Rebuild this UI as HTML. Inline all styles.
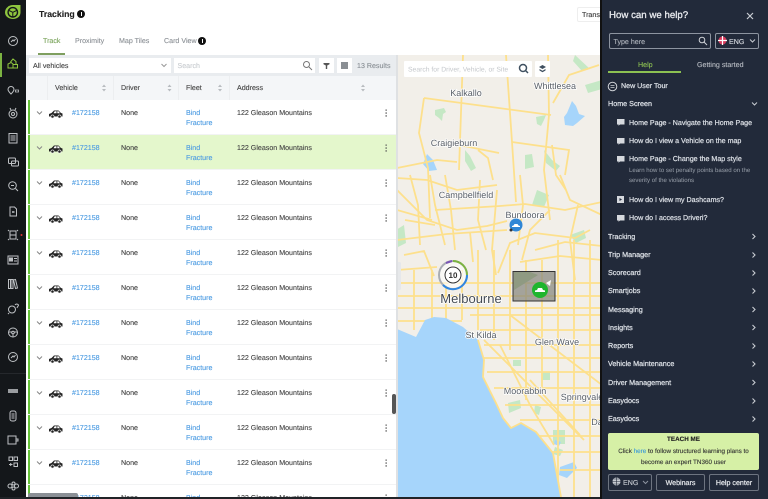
<!DOCTYPE html>
<html><head><meta charset="utf-8"><style>
html,body{margin:0;padding:0;width:768px;height:499px;overflow:hidden}
#w{position:absolute;left:0;top:0;width:768px;height:499px;overflow:hidden;background:#fff;font-family:"Liberation Sans",sans-serif;font-size:7.1px;color:#444;text-rendering:geometricPrecision;-webkit-text-stroke:.12px}
.a{position:absolute;white-space:nowrap;line-height:10px}
.r{position:absolute;left:28px;width:368px;height:35px;background:#fff;border-bottom:1px solid #f2f3f4;box-sizing:border-box}
.r:before{content:"";position:absolute;left:0;top:0;width:2px;height:34px;background:#66c23a}
.r span{position:absolute;line-height:10px;white-space:nowrap;top:8px}
.l{color:#4b9be2}
.h{position:absolute;top:83px;line-height:10px;color:#444}
.c{position:absolute;left:608px;color:#d9dde3;font-size:7.2px;line-height:10px;white-space:nowrap;-webkit-text-stroke:.28px #d9dde3}
.i{position:absolute;left:629px;color:#d9dde3;font-size:7.1px;line-height:10px;white-space:nowrap;-webkit-text-stroke:.25px #d9dde3}
.t{position:absolute;left:0;top:0}
</style></head><body><div id="w">

<!-- sidebar -->
<div class="a" style="left:0;top:0;width:26px;height:499px;background:#14171a"></div>
<div class="a" style="left:0;top:53px;width:2px;height:24px;background:#7cb342"></div>
<div class="a" style="left:0;top:373px;width:26px;height:1px;background:#25282c"></div>
<svg class="t" width="26" height="499" fill="none" stroke="#bfc2c5" stroke-width="1">
<path d="M5 12.500C5 8 9 5 13 5h7.500v7.500c0 4-3.500 6.500-7.500 6.500s-8-2.500-8-6.500z" fill="#8fc63f" stroke="none"/>
<circle cx="12.800" cy="12.300" r="4.700" stroke="#14171a" stroke-width="1.400"/><path d="M9 10.500l3.800 1.800 3.800-1.800M12.800 12.300v4.500" stroke="#14171a"/>
<circle cx="13" cy="41" r="4.500"/><path d="M11 42l2-2 1 1 1.500-2"/>
<path d="M8 68v-4l3-1.500 2 1.500v4zM10.500 62l2.500-3 3 2.500v2.500M13 64.500h4.500v3.500H13z" stroke="#8fc63f"/>
<path d="M11 94c-2-2-3-3-3-4.500a3 3 0 0 1 6 0c0 1.500-1 2.500-3 4.500z"/><path d="M15.500 92h3v-2h-3z" stroke-width=".8"/>
<path d="M10 108l1 2M16 108l-1 2"/><circle cx="13" cy="114" r="4"/><circle cx="13" cy="114" r="1.500"/>
<rect x="9" y="133.500" width="8" height="9.500"/><path d="M10.500 136h5M10.500 138h5M10.500 140h5"/>
<rect x="8.500" y="158" width="7" height="5.500" rx="1"/><rect x="11.500" y="161" width="7" height="5" rx="1"/>
<circle cx="12.500" cy="185.500" r="3.800"/><path d="M15.500 188.500l2.500 2.500M11 185.500h3"/>
<path d="M10 207h4.500l2 2v7h-6.500z"/><path d="M12 212h2.500" stroke-width="1.500"/>
<path d="M10 231h6v8h-6zM9 231l-1-1M17 231l1-1M9 239l-1 1M17 239l1 1M10 235h6"/>
<rect x="8" y="256" width="10" height="8"/><rect x="9.500" y="258" width="3" height="3" fill="#bfc2c5"/><path d="M14 258.500h3M14 261h3"/>
<path d="M8.500 279.500v9h2v-9zM11 279.500v9h2v-9zM13.500 280l2-.5 2 8.500-2 .5z"/>
<circle cx="12" cy="309.500" r="3.500"/><path d="M9 313l-1 1M15 305a2 2 0 0 1 3.500 0c0 1-1.200 1.500-1.500 3"/>
<circle cx="13" cy="332.500" r="4.500"/><circle cx="13" cy="332.500" r="1.300"/><path d="M8.500 332h3M14.500 332h3M13 334v3"/>
<circle cx="13" cy="357" r="4.500"/><path d="M11 358l2-2 1 1 1.500-2"/>
<rect x="8" y="389" width="10" height="4" fill="#9a9da0" stroke="none"/>
<rect x="10" y="411" width="6" height="10" rx="2"/><path d="M11.500 414h3M11.500 416h3M11.500 418h3"/>
<rect x="8" y="436" width="8" height="8"/><path d="M16 439h2v2h-2"/>
<rect x="9" y="457" width="3.500" height="3.500"/><rect x="14" y="457" width="3.500" height="3.500"/><rect x="14" y="463" width="3.500" height="3.500"/><path d="M9 464.500h3.500M10.700 463v3"/>
<circle cx="10" cy="486" r="2"/><circle cx="13.500" cy="483.500" r="1.500"/><circle cx="13.500" cy="488.500" r="1.500"/><circle cx="16.500" cy="486" r="2"/>
<circle cx="21.500" cy="235" r="1" fill="#d33" stroke="none"/>
</svg>

<!-- top -->
<div class="a" style="left:39px;top:9px;font-size:8.700px;font-weight:bold;color:#222;line-height:11px">Tracking</div>
<div class="a" style="left:77px;top:10px;width:8px;height:8px;background:#111;border-radius:50%"></div>
<div class="a" style="left:80.500px;top:12px;width:1.200px;height:4px;background:#fff"></div>
<div class="a" style="left:43px;top:36px;color:#79a35a">Track</div>
<div class="a" style="left:75px;top:36px;color:#8c9196">Proximity</div>
<div class="a" style="left:119px;top:36px;color:#8c9196">Map Tiles</div>
<div class="a" style="left:164px;top:36px;color:#8c9196">Card View</div>
<div class="a" style="left:198px;top:37px;width:8px;height:8px;background:#111;border-radius:50%"></div>
<div class="a" style="left:201.500px;top:39px;width:1.200px;height:4px;background:#fff"></div>
<div class="a" style="left:38px;top:53px;width:27px;height:2px;background:#7f9f5f"></div>
<div class="a" style="left:577px;top:7px;width:30px;height:15px;background:#fff;border:1px solid #eee;border-radius:2px;box-sizing:border-box;padding:2px 0 0 4px;color:#333;overflow:hidden">Transf</div>

<!-- toolbar -->
<div class="a" style="left:26px;top:55px;width:371px;height:21px;background:#e9ecef"></div>
<div class="a" style="left:29px;top:58px;width:142px;height:15px;background:#fff;padding:2.500px 0 0 4px;box-sizing:border-box;color:#444">All vehicles</div>
<svg class="t" style="left:160px;top:62px" width="8" height="7" fill="none" stroke="#999"><path d="M1.500 2l2.500 2.500L6.500 2"/></svg>
<div class="a" style="left:174px;top:58px;width:141px;height:15px;background:#fff;padding:2.500px 0 0 3.500px;box-sizing:border-box;color:#c8ccd0">Search</div>
<svg class="t" style="left:302px;top:60px" width="11" height="11" fill="none" stroke="#777"><circle cx="4.500" cy="4.500" r="3"/><path d="M7 7l3 3"/></svg>
<div class="a" style="left:319px;top:58px;width:15px;height:15px;background:#fff"></div>
<svg class="t" style="left:322px;top:62px" width="9" height="8" fill="#555"><path d="M1.500 1h6v1.300L5.200 3.500v3.500H3.800V3.500L1.500 2.300z"/></svg>
<div class="a" style="left:337px;top:58px;width:15px;height:15px;background:#fff"></div>
<div class="a" style="left:341px;top:62px;width:7px;height:7px;background:#8a8f94"></div>
<div class="a" style="left:357px;top:61px;color:#8a9096">13 Results</div>

<!-- table head -->
<div class="a" style="left:26px;top:76px;width:371px;height:24px;background:#f4f6f8"></div>
<div class="a" style="left:47px;top:76px;width:1px;height:24px;background:#eceef0"></div>
<div class="a" style="left:113px;top:76px;width:1px;height:24px;background:#eceef0"></div>
<div class="a" style="left:178px;top:76px;width:1px;height:24px;background:#eceef0"></div>
<div class="a" style="left:229px;top:76px;width:1px;height:24px;background:#eceef0"></div>
<div class="h" style="left:55px">Vehicle</div><div class="h" style="left:121px">Driver</div><div class="h" style="left:186px">Fleet</div><div class="h" style="left:237px">Address</div>
<svg class="t" width="400" height="100" fill="#b8bcc0">
<path d="M102 87l2-2.500 2 2.500zM102 89l2 2.500 2-2.500zM167.500 87l2-2.500 2 2.500zM167.500 89l2 2.500 2-2.500zM218 87l2-2.500 2 2.500zM218 89l2 2.500 2-2.500zM361 87l2-2.500 2 2.500zM361 89l2 2.500 2-2.500z"/>
</svg>

<!-- rows -->
<div class="r" style="top:100px"><span style="left:44px" class="l">#172158</span><span style="left:93px">None</span><span style="left:158px" class="l">Bind<br>Fracture</span><span style="left:209px">122 Gleason Mountains</span></div>
<div class="r" style="top:135px;background:#e4f7cc"><span style="left:44px" class="l">#172158</span><span style="left:93px">None</span><span style="left:158px" class="l">Bind<br>Fracture</span><span style="left:209px">122 Gleason Mountains</span></div>
<div class="r" style="top:170px"><span style="left:44px" class="l">#172158</span><span style="left:93px">None</span><span style="left:158px" class="l">Bind<br>Fracture</span><span style="left:209px">122 Gleason Mountains</span></div>
<div class="r" style="top:205px"><span style="left:44px" class="l">#172158</span><span style="left:93px">None</span><span style="left:158px" class="l">Bind<br>Fracture</span><span style="left:209px">122 Gleason Mountains</span></div>
<div class="r" style="top:240px"><span style="left:44px" class="l">#172158</span><span style="left:93px">None</span><span style="left:158px" class="l">Bind<br>Fracture</span><span style="left:209px">122 Gleason Mountains</span></div>
<div class="r" style="top:275px"><span style="left:44px" class="l">#172158</span><span style="left:93px">None</span><span style="left:158px" class="l">Bind<br>Fracture</span><span style="left:209px">122 Gleason Mountains</span></div>
<div class="r" style="top:310px"><span style="left:44px" class="l">#172158</span><span style="left:93px">None</span><span style="left:158px" class="l">Bind<br>Fracture</span><span style="left:209px">122 Gleason Mountains</span></div>
<div class="r" style="top:345px"><span style="left:44px" class="l">#172158</span><span style="left:93px">None</span><span style="left:158px" class="l">Bind<br>Fracture</span><span style="left:209px">122 Gleason Mountains</span></div>
<div class="r" style="top:380px"><span style="left:44px" class="l">#172158</span><span style="left:93px">None</span><span style="left:158px" class="l">Bind<br>Fracture</span><span style="left:209px">122 Gleason Mountains</span></div>
<div class="r" style="top:415px"><span style="left:44px" class="l">#172158</span><span style="left:93px">None</span><span style="left:158px" class="l">Bind<br>Fracture</span><span style="left:209px">122 Gleason Mountains</span></div>
<div class="r" style="top:450px"><span style="left:44px" class="l">#172158</span><span style="left:93px">None</span><span style="left:158px" class="l">Bind<br>Fracture</span><span style="left:209px">122 Gleason Mountains</span></div>
<div class="r" style="top:485px"><span style="left:44px" class="l">#172158</span><span style="left:93px">None</span><span style="left:158px" class="l">Bind<br>Fracture</span><span style="left:209px">122 Gleason Mountains</span></div>

<!-- row icons -->
<svg class="t" width="396" height="499">
<defs>
<g id="rw">
<path d="M37 11.500l2.500 2.500L42 11.500" fill="none" stroke="#888"/>
<path d="M49 16.500v-2.500l2.500-1 2.500-2.500h4.500l2.500 2.500 1.500.5v3z" fill="#222"/>
<path d="M54.700 11.200h1.800v2h-3zM57.300 11.200h1.200l1.500 2h-2.700z" fill="#fff"/>
<circle cx="52.500" cy="16.500" r="1.600" fill="#222" stroke="#fff" stroke-width=".6"/><circle cx="59.500" cy="16.500" r="1.600" fill="#222" stroke="#fff" stroke-width=".6"/>
<path d="M385.500 9.500h1.300v1.300h-1.300zM385.500 12.400h1.300v1.300h-1.300zM385.500 15.300h1.300v1.300h-1.300z" fill="#555"/>
</g>
</defs>
<use href="#rw" y="100"/><use href="#rw" y="135"/><use href="#rw" y="170"/><use href="#rw" y="205"/><use href="#rw" y="240"/><use href="#rw" y="275"/><use href="#rw" y="310"/><use href="#rw" y="345"/><use href="#rw" y="380"/><use href="#rw" y="415"/><use href="#rw" y="450"/><use href="#rw" y="485"/>
</svg>

<div class="a" style="left:392px;top:394px;width:4px;height:20px;background:#555;border-radius:2px"></div>
<div class="a" style="left:28px;top:493px;width:50px;height:4px;background:#8b9096;border-radius:2px 2px 0 0"></div>
<div class="a" style="left:0;top:497px;width:602px;height:2px;background:#202327"></div>

<!-- map -->
<svg class="t" style="left:397px;top:55px" width="205" height="442" viewBox="397 55 205 442">
<rect x="397" y="55" width="205" height="442" fill="#f2efe9"/>
<g fill="#c5e8c5">
<path d="M435 110l9-2 2 4-3 2-1 7-3-3-4-3zM536 117l10-2-2 5-3 6-4-2zM465 150l5 6 6 12-5 3-6-10zM525 155l7-1 2 13-9 2zM544 150l8 10 8 6-4 5-10-8z"/>
<path d="M575 55l15 14-8 2-9-10zM585 85l17-5v9l-14 4zM396 230l8-5 2 18-8 4zM537 190l12 5-5 12-12-2zM570 235l14-5 2 8-10 5zM513 360h8v6h-8zM542 372h8v8h-8zM508 403l12-3 1 8-12 5zM553 430h12v14h-12zM535 405l6 2-2 8-5-2zM555 447l8 3-3 6-7-2z"/>
</g>
<g fill="#a6d5fb">
<path d="M567 113l5-12 4 5 3 8 6 2-8 7-4 3-8-1-1-8z"/>
<path d="M427 154l6 6 4 10-8 1-6-7zM560 467l14-5 3 6-10 10-8-3zM555 440l6 2-2 4-5-2z"/>
</g>
<g fill="none" stroke="#fde08c" stroke-width="1.800">
<path d="M424 98L551 115M424 98l-5 35 9 35 2 50M463 55l-4 115M506 55l6 87 4 60M548 55l1 60-5 55 6 50M599 65l-30 10-16 28M397 168l40-8 20 2M512 142l57 8-4 25M459 145l40 8M478 150l10 8 5 22M552 145l4 30 10 15"/>
<path d="M397 190l30 30 30 10 30-4 20-5M405 220l30 5M430 175l5 30 10 40M397 210l35 10M470 232l3 30M497 190l-5 60 4 25M435 210l65-4 25-2 40 6 37-8M560 175l10 25 32 15M550 210l-20 20-8 30M578 205l-8 35 5 40M590 230l-15 8-40-5-25 10-12 30"/>
<path d="M404 255l20-4 10 25M397 283h205M397 296h205M397 270l40-3M397 308h205M397 321h65M470 315h132M414 270v60M432 270v48M446 285v35M462 270v50M478 250v80M494 250v90M510 250v100M526 260v140M542 260v130M558 240v257M574 240v257M590 240v257M480 330h122M484 345h118M484 358h118M487 372h115M494 388h108M505 405h97M520 420h82M535 436h67M548 452h54M560 470h42"/>
<path d="M484 340l100 100M510 315l92 70M500 345l30 60 24 40M530 380l50 55"/>
<path d="M410 175l8 30 2 40M445 175l6 35 4 40M397 240l50-6 60-4M480 180l-2 40 8 30M397 178l30 2 30 10 40-5M520 175l3 30-5 40M535 250l30-8 37 4M520 262l40-6 42 4"/>
</g>
<path d="M397 329l19 8 9-17 9-3 12 1 17 9 15 13 6 20-1 17 13 26 7 15 8 10 10-5 15 9 17 21 8 44H397z" fill="#a6d5fb"/>
<path d="M478 340l6 20-1 17 13 26 7 15 8 10 10-5 15 9 17 21 8 44" fill="none" stroke="#fde08c" stroke-width="1.800"/>
<rect x="397" y="262" width="4" height="28" rx="1.500" fill="#e6e8ea"/>
<g font-family="Liberation Sans, sans-serif" fill="#5a6068" font-size="9" text-anchor="middle" stroke="#fff" stroke-width="1.500" paint-order="stroke">
<text x="466" y="96">Kalkallo</text>
<text x="555" y="89">Whittlesea</text>
<text x="454" y="146">Craigieburn</text>
<text x="466" y="198">Campbellfield</text>
<text x="525" y="218">Bundoora</text>
<text x="481" y="338">St Kilda</text>
<text x="557" y="345">Glen Wave</text>
<text x="525" y="394">Moorabbin</text>
<text x="582" y="400">Springvale</text>
<text x="597" y="425">Da</text>
<text x="471" y="303" font-size="13" fill="#444a52">Melbourne</text>
</g>
<!-- cluster -->
<circle cx="453" cy="275" r="15" fill="#fff" fill-opacity=".55"/>
<g fill="none" stroke-width="2">
<circle cx="453" cy="275" r="14" stroke="#a9adb3"/>
<path d="M453 261a14 14 0 0 1 14 14" stroke="#7cb342"/>
<path d="M467 275a14 14 0 0 1-24 10" stroke="#2f86e0"/>
<path d="M446 263l6-2" stroke="#7a55b5"/>
</g>
<circle cx="453" cy="275" r="9.500" fill="#fff"/>
<circle cx="453" cy="275" r="8" fill="#fff" stroke="#333" stroke-width="1"/>
<text x="453" y="278" text-anchor="middle" font-family="Liberation Sans, sans-serif" font-weight="bold" font-size="8" fill="#333">10</text>
<!-- selection -->
<rect x="513" y="271.500" width="42" height="29.500" fill="#8a8a80" fill-opacity=".75" stroke="#333" stroke-width="1"/>
<path d="M514 290l16-10 8-5-8-3h-16z" fill="#8f9a82"/>
<path d="M546 283l5-3-1 6z" fill="#fff"/>
<circle cx="540" cy="290" r="8" fill="#1fb52e"/>
<path d="M535 292v-1.500l2-.5 1-2h4l1 2 2 .5v1.500z" fill="#fff"/>
<circle cx="516" cy="225" r="6.500" fill="#2f86d6"/>
<path d="M512 227v-1l1.500-.5 1-1.500h3l1 1.500 1.500.5v1z" fill="#fff"/>
<circle cx="511" cy="230" r="1.500" fill="#333"/>
<!-- map search -->
<rect x="404" y="61" width="128" height="16" fill="#fff" rx="1"/>
<text x="408" y="71.500" font-family="Liberation Sans, sans-serif" font-size="6.800" fill="#c5c8cc">Search for Driver, Vehicle, or Site</text>
<circle cx="523" cy="68" r="3.500" fill="none" stroke="#3f5060" stroke-width="1.500"/><path d="M525.500 70.500l2.500 2.500" stroke="#3f5060" stroke-width="1.500"/>
<rect x="535" y="61" width="15" height="16" fill="#fff" rx="1"/>
<path d="M542.500 65l3.500 2-3.500 2-3.500-2zM539.500 69l3 1.700 3-1.700v1.500l-3 1.700-3-1.700z" fill="#3f5060"/>
</svg>
<div class="a" style="left:396px;top:55px;width:1.500px;height:442px;background:#dfe1e3"></div>

<!-- help panel -->
<div class="a" style="left:600px;top:0;width:168px;height:499px;background:#222a3a;border-left:2px solid #111;box-sizing:border-box"></div>
<div class="a" style="left:609px;top:10px;color:#e8eaee;font-size:9.700px;line-height:12px;-webkit-text-stroke:.3px #e8eaee">How can we help?</div>
<svg class="t" style="left:746px;top:12px" width="9" height="9" stroke="#c8ccd2" stroke-width="1.200"><path d="M1 1l6 6M7 1L1 7"/></svg>
<div class="a" style="left:609px;top:33px;width:102px;height:16px;border:1px solid #8d94a0;border-radius:2px;box-sizing:border-box;padding:2.500px 0 0 3.500px;color:#aeb3bb">Type here</div>
<svg class="t" style="left:698px;top:36px" width="10" height="10" fill="none" stroke="#d0d3d8"><circle cx="4" cy="4" r="2.800"/><path d="M6 6l3 3"/></svg>
<div class="a" style="left:715px;top:33px;width:44px;height:16px;border:1px solid #8d94a0;border-radius:2px;box-sizing:border-box;padding:2.500px 0 0 13px;color:#d9dde3">ENG</div>
<svg class="t" style="left:718px;top:36px" width="9" height="9"><circle cx="4.500" cy="4.500" r="4" fill="#d8395b"/><path d="M0 4.500h9M4.500 0v9" stroke="#fff" stroke-width="1.200"/></svg>
<svg class="t" style="left:749px;top:38px" width="7" height="6" fill="none" stroke="#c8ccd2"><path d="M1 1.500l2.500 2.500L6 1.500"/></svg>
<div class="a" style="left:638px;top:60px;color:#8cc152">Help</div>
<div class="a" style="left:697px;top:60px;color:#b6bac1">Getting started</div>
<div class="a" style="left:608px;top:71px;width:73px;height:2px;background:#8cc152"></div>
<svg class="t" style="left:607px;top:81px" width="11" height="11" fill="none" stroke="#d0d3d8"><circle cx="5.500" cy="5.500" r="4.300"/><path d="M3.500 4.500h4M3.500 6.500h4" stroke-width=".8"/></svg>
<div class="a" style="left:621px;top:81px;color:#d9dde3;-webkit-text-stroke:.25px #d9dde3">New User Tour</div>
<div class="c" style="top:99px">Home Screen</div>
<svg class="t" style="left:751px;top:101px" width="7" height="6" fill="none" stroke="#c8ccd2"><path d="M1 1.500l2.500 2.500L6 1.500"/></svg>
<svg class="t" width="768" height="230" fill="#d6d9de">
<path d="M617 119h7.500v5.500h-4.500l-1.500 1.200v-1.200h-1.500zM617 138h7.500v5.500h-4.500l-1.500 1.200v-1.200h-1.500zM617 156h7.500v5.500h-4.500l-1.500 1.200v-1.200h-1.500zM617 215h7.500v5.500h-4.500l-1.500 1.200v-1.200h-1.500z"/>
<path d="M617 196h7v7h-7zM619.500 198v3l2.500-1.500z" fill-rule="evenodd"/>
</svg>
<div class="i" style="top:118px">Home Page - Navigate the Home Page</div>
<div class="i" style="top:136px">How do I view a Vehicle on the map</div>
<div class="i" style="top:154px">Home Page - Change the Map style</div>
<div class="i" style="top:166px;font-size:6.100px;color:#99a0aa;-webkit-text-stroke:0">Learn how to set penalty points based on the</div>
<div class="i" style="top:176px;font-size:6.100px;color:#99a0aa;-webkit-text-stroke:0">severity of the violations</div>
<div class="i" style="top:194.500px">How do I view my Dashcams?</div>
<div class="i" style="top:213px">How do I access Driveri?</div>
<div class="c" style="top:231.500px">Tracking</div>
<div class="c" style="top:250px">Trip Manager</div>
<div class="c" style="top:268px">Scorecard</div>
<div class="c" style="top:286px">Smartjobs</div>
<div class="c" style="top:304.500px">Messaging</div>
<div class="c" style="top:322.500px">Insights</div>
<div class="c" style="top:341px">Reports</div>
<div class="c" style="top:359px">Vehicle Maintenance</div>
<div class="c" style="top:377.500px">Driver Management</div>
<div class="c" style="top:396px">Easydocs</div>
<div class="c" style="top:414px">Easydocs</div>
<svg class="t" width="768" height="430" fill="none" stroke="#c8ccd2" stroke-width="1.100">
<path d="M752.500 234l2.500 2.500-2.500 2.500M752.500 252.500l2.500 2.500-2.500 2.500M752.500 270.500l2.500 2.500-2.500 2.500M752.500 288.500l2.500 2.500-2.500 2.500M752.500 307l2.500 2.500-2.500 2.500M752.500 325l2.500 2.500-2.500 2.500M752.500 343.500l2.500 2.500-2.500 2.500M752.500 361.500l2.500 2.500-2.500 2.500M752.500 380l2.500 2.500-2.500 2.500M752.500 398.500l2.500 2.500-2.500 2.500M752.500 416.500l2.500 2.500-2.500 2.500"/>
</svg>
<div class="a" style="left:608px;top:433px;width:151px;height:37px;background:#d6f0a6;border-radius:2px"></div>
<div class="a" style="left:608px;top:435px;width:151px;text-align:center;color:#222;font-weight:bold;font-size:6.300px">TEACH ME</div>
<div class="a" style="left:608px;top:447px;width:151px;text-align:center;color:#333;font-size:6.300px">Click <span style="color:#3a9ad9">here</span> to follow structured learning plans to</div>
<div class="a" style="left:608px;top:457.500px;width:151px;text-align:center;color:#333;font-size:6.300px">become an expert TN360 user</div>
<div class="a" style="left:608px;top:474px;width:44px;height:17px;border:1px solid #6d7480;border-radius:2px;box-sizing:border-box;padding:3px 0 0 14px;color:#c8ccd2">ENG</div>
<svg class="t" style="left:612px;top:477px" width="9" height="9"><circle cx="4.500" cy="4.500" r="4" fill="#c8ccd2"/><path d="M0 4.500h9M4.500 0v9M1.500 2h6M1.500 7h6" stroke="#222a3a" stroke-width=".6"/></svg>
<svg class="t" style="left:642px;top:480px" width="7" height="6" fill="none" stroke="#8d94a0"><path d="M1 1l2.500 2.500L6 1"/></svg>
<div class="a" style="left:656px;top:474px;width:49px;height:17px;border:1px solid #6d7480;border-radius:2px;box-sizing:border-box;padding-top:3px;text-align:center;color:#e0e3e7;-webkit-text-stroke:.25px #e0e3e7">Webinars</div>
<div class="a" style="left:709px;top:474px;width:50px;height:17px;border:1px solid #6d7480;border-radius:2px;box-sizing:border-box;padding-top:3px;text-align:center;color:#e0e3e7;-webkit-text-stroke:.25px #e0e3e7">Help center</div>
</div></body></html>
